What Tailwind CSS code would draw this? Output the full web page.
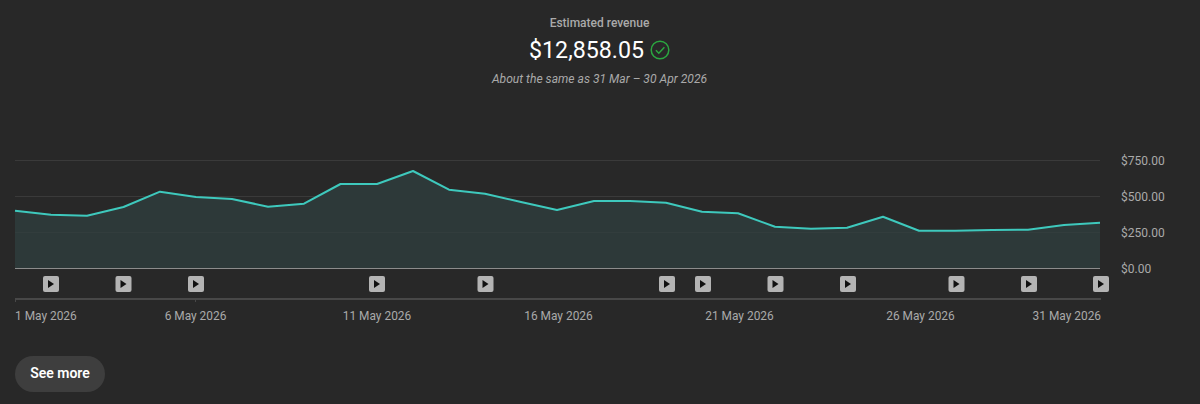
<!DOCTYPE html>
<html>
<head>
<meta charset="utf-8">
<script src="https://cdn.jsdelivr.net/npm/@tailwindcss/browser@4"></script>
</head>
<body class="m-0">
<div class="w-[1200px] h-[404px] overflow-hidden bg-[#282828] font-['Roboto',sans-serif] flex flex-col">
  <div class="flex flex-col items-center pt-[15px] h-[142px] w-[1199px]">
    <div class="text-[12px] leading-[15px] font-medium text-[#aaaaaa] translate-y-px">Estimated revenue</div>
    <div class="flex items-center h-[30px] mt-[5px] gap-[6px]">
      <span class="text-[23.2px] leading-[30px] text-white">$12,858.05</span>
      <svg class="w-[20px] h-[20px]" viewBox="0 0 20 20" fill="none" stroke="#2ba640" stroke-width="1.5"><circle cx="10" cy="10" r="8.8"/><path d="M5.9 10.3 L8.8 13.2 L14.4 7.2" stroke-width="1.5"/></svg>
    </div>
    <div class="mt-[7px] text-[12.1px] leading-[15px] italic text-[#aaaaaa]">About the same as 31 Mar – 30 Apr 2026</div>
  </div>
  <div class="flex items-start h-[160px]">
    <svg class="w-[1110px] h-[160px] shrink-0" viewBox="0 142 1110 160" fill="none">
      <path d="M15 160.5H1100M15 196.5H1100M15 232.5H1100" stroke="#3a3a3a" stroke-width="1"/>
      <polygon fill="#2d3939" points="15,210.7 51,214.7 87,215.7 123.5,207 160,191.7 196,197 232,199 268,206.7 304,203.7 340.5,184 377,184 413,171 449,189.7 485,193.7 521,202 557,210 594,201 630,201 666,202.7 702,211.7 738,213.3 775,226.7 811,228.7 847,227.7 883,216.7 919,230.7 955,230.7 992,230 1028,229.7 1064,225 1100,222.7 1100,268 15,268"/>
      <path d="M15 232.5H1100" stroke="#323d3d" stroke-width="1"/>
      <polyline stroke="#3ec9bd" stroke-width="2" stroke-linejoin="round" points="15,210.7 51,214.7 87,215.7 123.5,207 160,191.7 196,197 232,199 268,206.7 304,203.7 340.5,184 377,184 413,171 449,189.7 485,193.7 521,202 557,210 594,201 630,201 666,202.7 702,211.7 738,213.3 775,226.7 811,228.7 847,227.7 883,216.7 919,230.7 955,230.7 992,230 1028,229.7 1064,225 1100,222.7"/>
      <path d="M15 268.5H1100" stroke="#8c8c8c" stroke-width="1"/>
      <path d="M15 299H1101" stroke="#484848" stroke-width="2"/>
      <path d="M15.500 298V303M195.500 298V303" stroke="#484848" stroke-width="1"/>
      <g fill="#b4b4b4">
        <rect x="43" y="276" width="16" height="16" rx="2"/><rect x="115.500" y="276" width="16" height="16" rx="2"/><rect x="188" y="276" width="16" height="16" rx="2"/><rect x="369" y="276" width="16" height="16" rx="2"/><rect x="477.500" y="276" width="16" height="16" rx="2"/><rect x="659" y="276" width="16" height="16" rx="2"/><rect x="695" y="276" width="16" height="16" rx="2"/><rect x="767.500" y="276" width="16" height="16" rx="2"/><rect x="840" y="276" width="16" height="16" rx="2"/><rect x="948.500" y="276" width="16" height="16" rx="2"/><rect x="1021" y="276" width="16" height="16" rx="2"/><rect x="1093" y="276" width="16" height="16" rx="2"/>
      </g>
      <g fill="#111111">
        <path d="M48 280v8l6-4z"/><path d="M120.500 280v8l6-4z"/><path d="M193 280v8l6-4z"/><path d="M374 280v8l6-4z"/><path d="M482.500 280v8l6-4z"/><path d="M664 280v8l6-4z"/><path d="M700 280v8l6-4z"/><path d="M772.500 280v8l6-4z"/><path d="M845 280v8l6-4z"/><path d="M953.500 280v8l6-4z"/><path d="M1026 280v8l6-4z"/><path d="M1098 280v8l6-4z"/>
      </g>
    </svg>
    <div class="flex flex-col ml-[11px] pt-px text-[12px] text-[#aaaaaa]">
      <div class="h-[36px] leading-[36px]">$750.00</div>
      <div class="h-[36px] leading-[36px]">$500.00</div>
      <div class="h-[36px] leading-[36px]">$250.00</div>
      <div class="h-[36px] leading-[37px]">$0.00</div>
    </div>
  </div>
  <div class="flex pl-[15px] mt-[7px] text-[11.9px] leading-[15px] text-[#aaaaaa]">
    <div class="w-[90px]">1 May 2026</div>
    <div class="w-[181px] text-center">6 May 2026</div>
    <div class="w-[182px] text-center">11 May 2026</div>
    <div class="w-[181px] text-center">16 May 2026</div>
    <div class="w-[181px] text-center">21 May 2026</div>
    <div class="w-[181px] text-center">26 May 2026</div>
    <div class="w-[90px] text-right">31 May 2026</div>
  </div>
  <button class="ml-[15px] mt-[32px] w-[90px] h-[36px] rounded-full bg-[#3e3e3e] text-white text-[14px] leading-[34px] font-semibold"><span class="block -translate-y-px">See more</span></button>
</div>
</body>
</html>
